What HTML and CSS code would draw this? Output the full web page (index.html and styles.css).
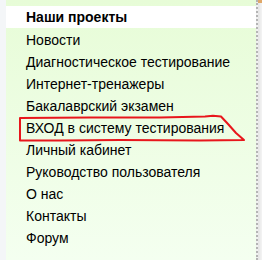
FILE: index.html
```html
<!DOCTYPE html>
<html lang="ru">
<head>
    <meta charset="UTF-8">
    <title>Наши проекты</title>
    <link rel="stylesheet" href="styles.css">
</head>
<body>

<div class="page">
    <div class="menu">
        <h3 class="menu-title">Наши проекты</h3>
        <ul>
            <li><a href="#">Новости</a></li>
            <li><a href="#">Диагностическое тестирование</a></li>
            <li><a href="#">Интернет-тренажеры</a></li>
            <li><a href="#">Бакалаврский экзамен</a></li>
            <li class="marked"><a href="#">ВХОД в систему тестирования</a></li>
            <li><a href="#">Личный кабинет</a></li>
            <li><a href="#">Руководство пользователя</a></li>
            <li><a href="#">О нас</a></li>
            <li><a href="#">Контакты</a></li>
            <li><a href="#">Форум</a></li>
        </ul>
    </div>
    <div class="side"></div>

    <svg class="scribble" width="262" height="260" viewBox="0 0 262 260">
        <path d="M20 118 L90 117.5 L160 117.5 L205 116.5 L213 115.8 L221 116.5 L228 124 L236 133 L244 140 L200 140.5 L120 140 L60 140.5 L20 140.5 Z"
              fill="none" stroke="#e8161c" stroke-width="2" stroke-linejoin="round"/>
    </svg>
</div>

</body>
</html>
```

FILE: styles.css
```css
body, h3, ul, li {
    margin: 0;
    padding: 0;
}

body {
    background-color: #f4f6f8;
    font-family: Arial, "Liberation Sans", sans-serif;
    font-size: 14px;
    color: #000;
}

.page {
    position: relative;
    display: flex;
    height: 260px;
    padding-left: 6px;
}

.menu {
    width: 250px;
    padding-top: 6px;
    background: linear-gradient(#e7fcd7, #f4fff0);
}

.menu-title {
    background-color: #fff;
    font-size: 14px;
    font-weight: bold;
    line-height: 22px;
    padding-left: 20px;
}

.menu ul {
    list-style: none;
    padding-top: 1px;
}

.menu li {
    line-height: 22px;
    padding-left: 20px;
}

.menu a {
    color: #000;
    text-decoration: none;
}

.side {
    width: 6px;
    border-left: 2px dotted #b4b4b4;
    background: linear-gradient(90deg, #e4e4e4, #f4f4f4);
    box-sizing: border-box;
}

.side::before {
    content: "";
    display: block;
    height: 3px;
    background-color: #e0a868;
}

.scribble {
    position: absolute;
    left: 0;
    top: 0;
}
```
